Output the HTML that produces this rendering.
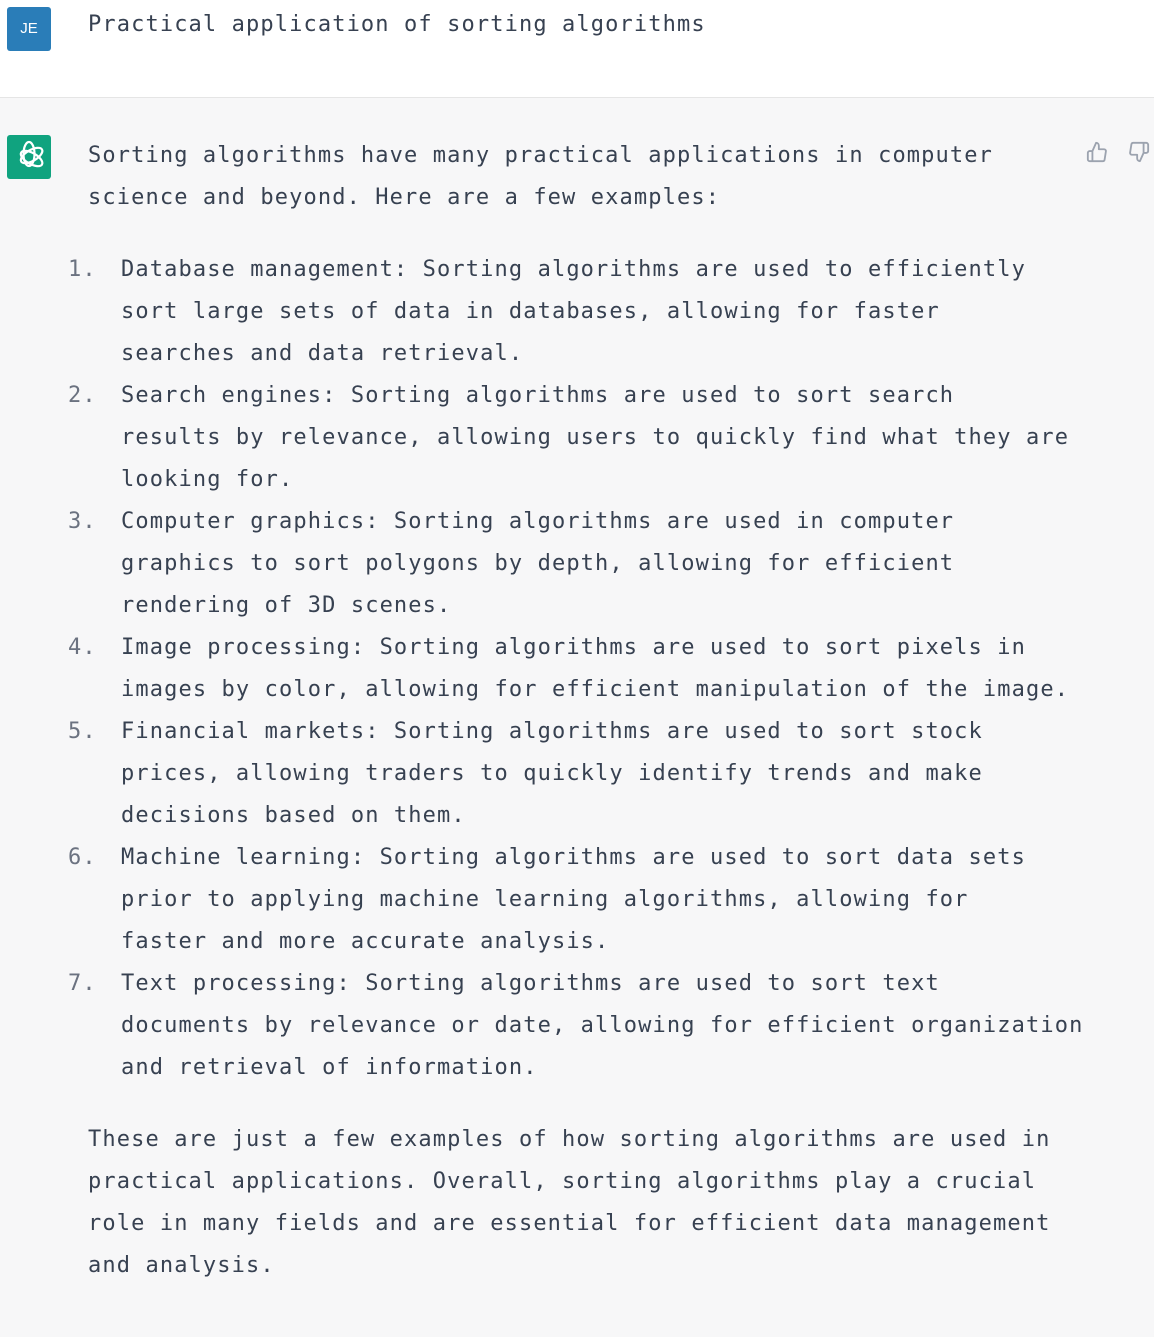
<!DOCTYPE html>
<html><head><meta charset="utf-8"><style>
body{margin:0;width:1154px;height:1337px;background:#f7f7f8;font-family:"DejaVu Sans Mono","Liberation Mono",monospace;color:#374151;overflow:hidden}
.top{position:absolute;left:0;top:0;width:1154px;height:97px;background:#fff;border-bottom:1px solid #e5e5e5}
.av{position:absolute;left:7px;width:44px;height:44px;border-radius:3px}
.t{position:absolute;font-size:22px;letter-spacing:1.12px;line-height:42px;white-space:nowrap}
.n{color:#6b7280}
</style></head><body>
<div class="top">
<div class="av" style="top:7px;background:#2a7db8;color:#fff;font-family:'Liberation Sans',sans-serif;font-size:15px;line-height:44px;text-align:center">JE</div>
<div class="t" style="left:88px;top:4px">Practical application of sorting algorithms</div>
</div>
<div class="av" style="top:135px;background:#10a37f">
<svg width="44" height="44" viewBox="0 0 44 44" fill="none" stroke="#fff" stroke-width="2.2">
<g transform="translate(22 22)">
<ellipse rx="5.5" ry="12" transform="rotate(0) translate(0 -3)"/>
<ellipse rx="5.5" ry="12" transform="rotate(60) translate(0 -3)"/>
<ellipse rx="5.5" ry="12" transform="rotate(120) translate(0 -3)"/>
</g></svg></div>
<svg style="position:absolute;left:1086px;top:141px" width="22" height="22" viewBox="0 0 24 24" fill="none" stroke="#9ca3af" stroke-width="2" stroke-linejoin="round"><path d="M7 22H4a2 2 0 0 1-2-2v-7a2 2 0 0 1 2-2h3m7-2V5a3 3 0 0 0-3-3l-4 9v11h11.3a2 2 0 0 0 2-1.7l1.4-9a2 2 0 0 0-2-2.3z"/></svg>
<svg style="position:absolute;left:1128px;top:141px" width="22" height="22" viewBox="0 0 24 24" fill="none" stroke="#9ca3af" stroke-width="2" stroke-linejoin="round"><path d="M17 2h2.7A2.3 2.3 0 0 1 22 4v7a2.3 2.3 0 0 1-2.3 2H17m-7 2v4a3 3 0 0 0 3 3l4-9V2H5.7a2 2 0 0 0-2 1.7l-1.4 9a2 2 0 0 0 2 2.3z"/></svg>
<div class="t" style="left:88px;top:135px">Sorting algorithms have many practical applications in computer<br>science and beyond. Here are a few examples:</div>
<div class="t n" style="left:68px;top:249px">1.<br><br><br>2.<br><br><br>3.<br><br><br>4.<br><br>5.<br><br><br>6.<br><br><br>7.</div>
<div class="t" style="left:121px;top:249px">Database management: Sorting algorithms are used to efficiently<br>sort large sets of data in databases, allowing for faster<br>searches and data retrieval.<br>Search engines: Sorting algorithms are used to sort search<br>results by relevance, allowing users to quickly find what they are<br>looking for.<br>Computer graphics: Sorting algorithms are used in computer<br>graphics to sort polygons by depth, allowing for efficient<br>rendering of 3D scenes.<br>Image processing: Sorting algorithms are used to sort pixels in<br>images by color, allowing for efficient manipulation of the image.<br>Financial markets: Sorting algorithms are used to sort stock<br>prices, allowing traders to quickly identify trends and make<br>decisions based on them.<br>Machine learning: Sorting algorithms are used to sort data sets<br>prior to applying machine learning algorithms, allowing for<br>faster and more accurate analysis.<br>Text processing: Sorting algorithms are used to sort text<br>documents by relevance or date, allowing for efficient organization<br>and retrieval of information.</div>
<div class="t" style="left:88px;top:1119px">These are just a few examples of how sorting algorithms are used in<br>practical applications. Overall, sorting algorithms play a crucial<br>role in many fields and are essential for efficient data management<br>and analysis.</div>
</body></html>
